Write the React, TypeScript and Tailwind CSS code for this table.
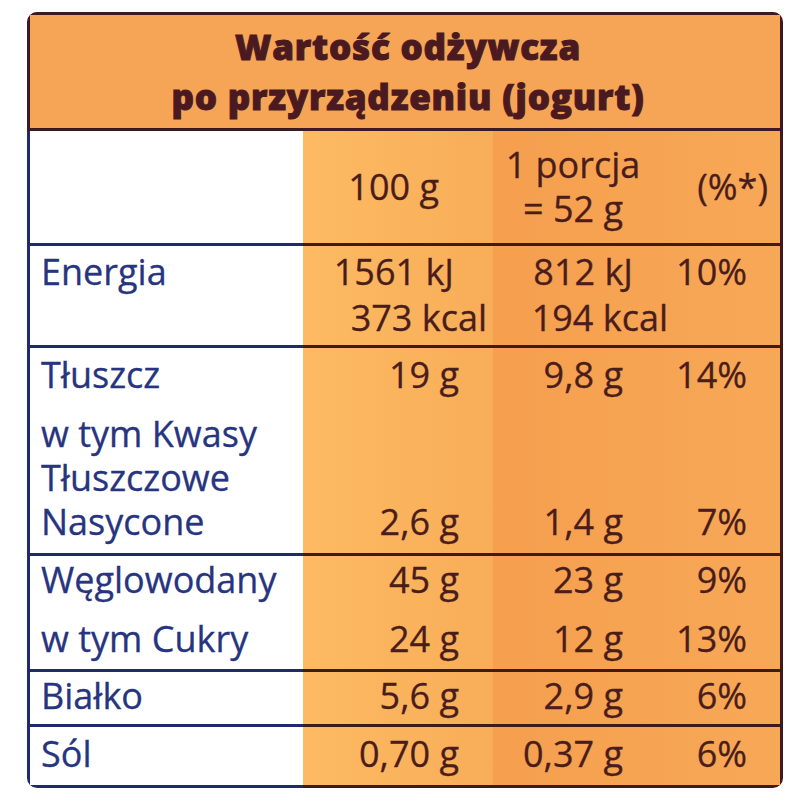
type Line = {
  label: string;
  a?: string;
  b?: string;
  p?: string;
  gap?: string;
  aCls?: string;
  bCls?: string;
};

type Row = {
  h: string;
  pad: string;
  lead: string;
  last?: boolean;
  lines: Line[];
};

const rows: Row[] = [
  {
    h: 'h-[102px]',
    pad: 'pt-[3px]',
    lead: 'h-[46px] leading-[46px]',
    lines: [
      { label: 'Energia', a: '1561 kJ', b: '812 kJ', p: '10%', aCls: 'mr-[5px]', bCls: '-mr-[10px]' },
      { label: '', a: '373 kcal', b: '194 kcal', aCls: '-mr-[28px]', bCls: '-mr-[45px]' },
    ],
  },
  {
    h: 'h-[208px]',
    pad: 'pt-[5px]',
    lead: 'h-[44px] leading-[44px]',
    lines: [
      { label: 'Tłuszcz', a: '19 g', b: '9,8 g', p: '14%' },
      { label: 'w tym Kwasy', gap: 'mt-[15px]' },
      { label: 'Tłuszczowe' },
      { label: 'Nasycone', a: '2,6 g', b: '1,4 g', p: '7%' },
    ],
  },
  {
    h: 'h-[116px]',
    pad: 'pt-[2px]',
    lead: 'h-[44px] leading-[44px]',
    lines: [
      { label: 'Węglowodany', a: '45 g', b: '23 g', p: '9%' },
      { label: 'w tym Cukry', a: '24 g', b: '12 g', p: '13%', gap: 'mt-[15px]' },
    ],
  },
  {
    h: 'h-[55px]',
    pad: 'pt-[2px]',
    lead: 'h-[44px] leading-[44px]',
    lines: [{ label: 'Białko', a: '5,6 g', b: '2,9 g', p: '6%' }],
  },
  {
    h: 'h-[64px]',
    pad: 'pt-[5px]',
    lead: 'h-[44px] leading-[44px]',
    last: true,
    lines: [{ label: 'Sól', a: '0,70 g', b: '0,37 g', p: '6%' }],
  },
];

function NutritionRow({ row }: { row: Row }) {
  return (
    <div className={`flex ${row.h}`}>
      <div
        className={`w-[276px] bg-white border-t-[3px] border-l-[3px] border-[#1f2a6e] pl-[11px] text-[#27347f] ${row.pad} ${
          row.last ? 'border-b-[3px]' : ''
        }`}
      >
        {row.lines.map((l, i) => (
          <div key={i} className={`${row.lead} ${l.gap ?? ''} whitespace-nowrap`}>
            {l.label || '\u00a0'}
          </div>
        ))}
      </div>
      <div
        className={`w-[190px] bg-linear-to-r from-[#fdba63] to-[#f8ad58] border-t-[3px] border-[#3d1a1c] pr-[34px] text-right text-[#4a1d1b] ${row.pad} ${
          row.last ? 'border-b-[3px]' : ''
        }`}
      >
        {row.lines.map((l, i) => (
          <div key={i} className={`${row.lead} ${l.gap ?? ''} ${l.aCls ?? ''} whitespace-nowrap`}>
            {l.a || '\u00a0'}
          </div>
        ))}
      </div>
      <div
        className={`flex w-[290px] bg-linear-to-r from-[#f59f4f] to-[#f7a856] border-t-[3px] border-r-[3px] border-[#3d1a1c] text-[#4a1d1b] ${row.pad} ${
          row.last ? 'border-b-[3px]' : ''
        }`}
      >
        <div className="w-[130px] text-right">
          {row.lines.map((l, i) => (
            <div key={i} className={`${row.lead} ${l.gap ?? ''} ${l.bCls ?? ''} whitespace-nowrap`}>
              {l.b || '\u00a0'}
            </div>
          ))}
        </div>
        <div className="w-[124px] text-right">
          {row.lines.map((l, i) => (
            <div key={i} className={`${row.lead} ${l.gap ?? ''} whitespace-nowrap`}>
              {l.p || '\u00a0'}
            </div>
          ))}
        </div>
      </div>
    </div>
  );
}

export default function App() {
  return (
    <div className="min-h-[800px] w-[800px] bg-white pl-[27px] pt-[12px] font-['Open_Sans',sans-serif] text-[36px] [-webkit-text-stroke:0.3px_currentColor]">
      <div className="w-[756px] overflow-hidden rounded-[10px]">
        <div className="flex h-[119px] flex-col items-center justify-center border-[3px] border-[#3b1a24] bg-[#f6a455] pl-[6px] text-center text-[35px] font-extrabold leading-[50px] tracking-[0.8px] text-[#4a1a20] [-webkit-text-stroke:1px_#4a1a20]">
          <div>Wartość odżywcza</div>
          <div>po przyrządzeniu (jogurt)</div>
        </div>

        <div className="flex h-[112px]">
          <div className="w-[276px] bg-white border-l-[3px] border-[#1f2a6e]" />
          <div className="flex w-[190px] items-center justify-end bg-linear-to-r from-[#fdba63] to-[#f8ad58] pr-[54px] text-[#4a1d1b]">
            100 g
          </div>
          <div className="flex w-[290px] items-center bg-linear-to-r from-[#f59f4f] to-[#f7a856] border-r-[3px] border-[#3d1a1c] text-[#4a1d1b]">
            <div className="w-[160px] text-center leading-[44px]">
              <div>1 porcja</div>
              <div>= 52 g</div>
            </div>
            <div className="flex-1 pr-[12px] text-right">(%*)</div>
          </div>
        </div>

        {rows.map((r, i) => (
          <NutritionRow key={i} row={r} />
        ))}
      </div>
    </div>
  );
}
